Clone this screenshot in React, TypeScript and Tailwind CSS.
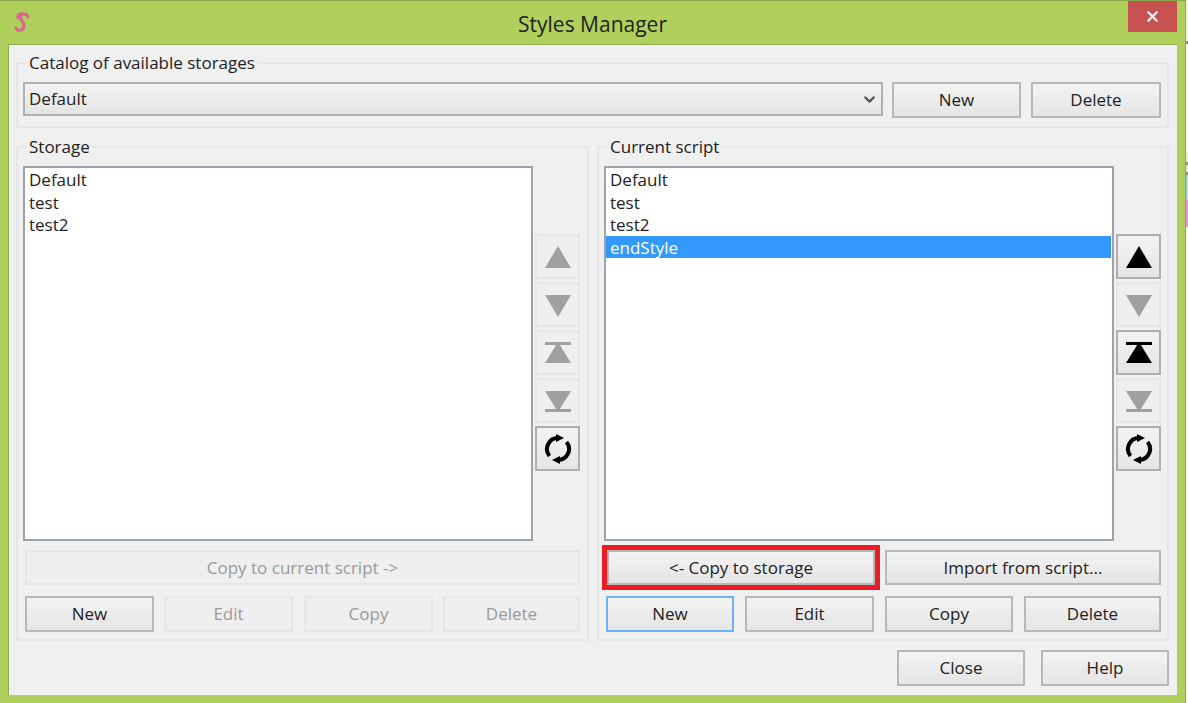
import React from 'react';
import { ChevronDown, X } from 'lucide-react';

const font = { fontFamily: '"Open Sans", "Noto Sans", sans-serif' };

type BtnProps = {
  label: string;
  className?: string;
  disabled?: boolean;
  focused?: boolean;
};

const Btn: React.FC<BtnProps> = ({ label, className = '', disabled, focused }) => (
  <button
    className={`flex items-center justify-center text-[17px] border-2 ${
      disabled
        ? 'border-[#e6e6e6] bg-[#efefef] text-[#9a9a9a]'
        : focused
          ? 'border-[#6cb2f8] bg-gradient-to-b from-[#f3f3f3] to-[#e5e5e5] text-[#222]'
          : 'border-[#b8b8b8] bg-gradient-to-b from-[#f3f3f3] to-[#e5e5e5] text-[#222]'
    } ${className}`}
  >
    {label}
  </button>
);

type IconKind = 'up' | 'down' | 'top' | 'bottom';

const Arrow: React.FC<{ kind: IconKind; color: string }> = ({ kind, color }) => (
  <svg width="28" height="26" viewBox="0 0 28 26" fill={color}>
    {kind === 'up' && <polygon points="14,2 27,24 1,24" />}
    {kind === 'down' && <polygon points="1,3 27,3 14,25" />}
    {kind === 'top' && (
      <>
        <rect x="1" y="2" width="26" height="3" />
        <polygon points="14,2 27,23 1,23" />
      </>
    )}
    {kind === 'bottom' && (
      <>
        <polygon points="1,3 27,3 14,24" />
        <rect x="1" y="21" width="26" height="3" />
      </>
    )}
  </svg>
);

const Reload = () => (
  <svg width="30" height="30" viewBox="0 0 30 30" fill="none">
    <path d="M15 4 A11 11 0 0 0 6.5 22" stroke="#000" strokeWidth="4" />
    <path d="M15 26 A11 11 0 0 0 23.5 8" stroke="#000" strokeWidth="4" />
    <polygon points="13,0 21,4 13,8" fill="#000" />
    <polygon points="17,30 9,26 17,22" fill="#000" />
  </svg>
);

const SideBtn: React.FC<{ children: React.ReactNode; active?: boolean; className?: string }> = ({
  children,
  active,
  className = '',
}) => (
  <div
    className={`w-[45px] flex items-center justify-center border-2 ${
      active
        ? 'border-[#b0b0b0] bg-gradient-to-b from-[#f3f3f3] to-[#e5e5e5]'
        : 'border-[#e6e6e6] bg-[#efefef]'
    } ${className}`}
  >
    {children}
  </div>
);

const ListBox: React.FC<{ items: string[]; selected?: string }> = ({ items, selected }) => (
  <div className="w-[510px] h-[375px] border-2 border-[#9ba3ad] bg-white pr-[1px] text-[17px] text-[#222]">
    {items.map((item) => (
      <div
        key={item}
        className={`h-[22.6px] leading-[24px] pl-1 ${item === selected ? 'bg-[#3399ff] text-white' : ''}`}
      >
        {item}
      </div>
    ))}
  </div>
);

const Legend: React.FC<{ label: string }> = ({ label }) => (
  <legend className="ml-[4px] px-[2px] h-6 leading-6 text-[17px] text-[#222]">{label}</legend>
);

const GRAY = '#a0a0a0';

const App: React.FC = () => {
  return (
    <div className="w-[1188px] h-[703px] flex bg-white overflow-hidden" style={font}>
      <div className="w-[1186px] h-[703px] shrink-0 flex flex-col bg-[#b0d05e] border-t border-r border-[#8aa84c]">
        <div className="h-[43px] shrink-0 flex items-start">
          <div className="w-[57px] pl-[14px] pt-[11px]">
            <svg width="18" height="22" viewBox="0 0 18 22" fill="none">
              <path
                d="M14 5 C13 1 7 1 6.5 5 C6 8 10.5 10 10 14 C9.5 18.5 4 20 2 16 M9.5 2 C6 1 3 3 4 6"
                stroke="#d9668f"
                strokeWidth="3"
                strokeLinecap="round"
              />
            </svg>
          </div>
          <span className="flex-1 text-center text-[21px] leading-[26px] mt-[10px] text-[#222]">Styles Manager</span>
          <div className="w-[49px] h-[31px] mr-[8px] bg-[#c75050] flex items-center justify-center">
            <X size={17} strokeWidth={3} color="#fff" />
          </div>
        </div>
        <div className="ml-2 w-[1169px] h-[651px] box-border bg-[#f0f0f0] border-t border-l border-[#8aa84c] pl-[7px] pr-[8px] pt-[6px] flex flex-col">
          <fieldset className="border-2 border-[#e6e6e6] h-[77px] px-[5px]">
            <Legend label="Catalog of available storages" />
            <div className="flex items-start mt-[7px]">
              <div className="w-[860px] h-[34px] border-2 border-[#b0b0b0] bg-gradient-to-b from-[#f3f3f3] to-[#e5e5e5] flex items-center justify-between pl-1 pr-[3px] text-[17px] text-[#222]">
                <span>Default</span>
                <ChevronDown size={17} strokeWidth={3} color="#555" />
              </div>
              <Btn label="New" className="w-[129px] h-[36px] ml-[9px]" />
              <Btn label="Delete" className="w-[130px] h-[36px] ml-[10px]" />
            </div>
          </fieldset>

          <div className="flex gap-2 mt-[7px]">
            <fieldset className="w-[573px] h-[506px] border-2 border-[#e6e6e6] px-[5px]">
              <Legend label="Storage" />
              <div className="flex mt-[7px]">
                <ListBox items={['Default', 'test', 'test2']} />
                <div className="ml-[2px] mt-[68px] flex flex-col gap-[3px]">
                  <SideBtn className="h-[45px]"><Arrow kind="up" color={GRAY} /></SideBtn>
                  <SideBtn className="h-[45px]"><Arrow kind="down" color={GRAY} /></SideBtn>
                  <SideBtn className="h-[45px]"><Arrow kind="top" color={GRAY} /></SideBtn>
                  <SideBtn className="h-[45px]"><Arrow kind="bottom" color={GRAY} /></SideBtn>
                  <SideBtn active className="h-[45px]"><Reload /></SideBtn>
                </div>
              </div>
              <Btn disabled label="Copy to current script ->" className="w-[555px] h-[35px] ml-[2px] mt-[9px]" />
              <div className="flex ml-[2px] mt-[11px]">
                <Btn label="New" className="w-[129px] h-[36px]" />
                <Btn disabled label="Edit" className="w-[129px] h-[36px] ml-[10px]" />
                <Btn disabled label="Copy" className="w-[129px] h-[36px] ml-[11px]" />
                <Btn disabled label="Delete" className="w-[137px] h-[36px] ml-[10px]" />
              </div>
            </fieldset>

            <fieldset className="w-[572px] h-[506px] border-2 border-[#e6e6e6] px-[5px]">
              <Legend label="Current script" />
              <div className="flex mt-[7px]">
                <ListBox items={['Default', 'test', 'test2', 'endStyle']} selected="endStyle" />
                <div className="ml-[2px] mt-[68px] flex flex-col gap-[3px]">
                  <SideBtn active className="h-[45px]"><Arrow kind="up" color="#000" /></SideBtn>
                  <SideBtn className="h-[45px]"><Arrow kind="down" color={GRAY} /></SideBtn>
                  <SideBtn active className="h-[45px]"><Arrow kind="top" color="#000" /></SideBtn>
                  <SideBtn className="h-[45px]"><Arrow kind="bottom" color={GRAY} /></SideBtn>
                  <SideBtn active className="h-[45px]"><Reload /></SideBtn>
                </div>
              </div>
              <div className="flex mt-[9px] ml-[2px]">
                <Btn label="<- Copy to storage" className="w-[268px] h-[35px] ml-px outline-[5px] outline-[#ed1c24] outline-solid" />
                <Btn label="Import from script..." className="w-[276px] h-[35px] ml-[10px]" />
              </div>
              <div className="flex ml-[2px] mt-[11px]">
                <Btn focused label="New" className="w-[128px] h-[36px]" />
                <Btn label="Edit" className="w-[129px] h-[36px] ml-[11px]" />
                <Btn label="Copy" className="w-[128px] h-[36px] ml-[11px]" />
                <Btn label="Delete" className="w-[137px] h-[36px] ml-[11px]" />
              </div>
            </fieldset>
          </div>

          <div className="flex justify-end gap-[16px] mt-[9px]">
            <Btn label="Close" className="w-[128px] h-[36px]" />
            <Btn label="Help" className="w-[128px] h-[36px]" />
          </div>
        </div>
      </div>
      <div className="flex-1 flex flex-col">
        <div className="h-[41px] bg-[#f2f2f2]" />
        <div className="h-[3px] bg-[#8a8a8a]" />
        <div className="h-[108px] bg-white" />
        <div className="h-[10px] bg-[#e8e8e8]" />
        <div className="h-[3px] bg-[#8a8a8a]" />
        <div className="h-[7px] bg-[#e8e8e8]" />
        <div className="h-[3px] bg-[#8a8a8a]" />
        <div className="h-[25px] bg-[#a8d4f0]" />
        <div className="h-[27px] bg-[#f48ae8]" />
      </div>
    </div>
  );
};

export default App;
